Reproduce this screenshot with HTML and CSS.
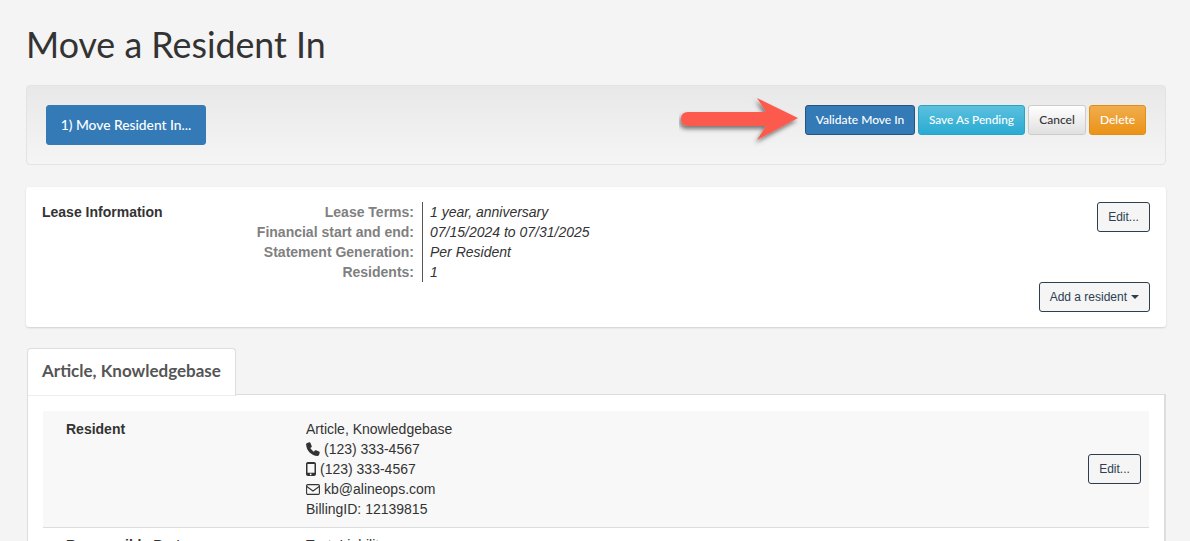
FILE: index.html
```html
<!DOCTYPE html>
<html lang="en">
<head>
<meta charset="utf-8">
<title>Move a Resident In</title>
<link rel="stylesheet" href="styles.css">
</head>
<body>
<main class="page">
  <h1 class="title">Move a Resident In</h1>

  <section class="toolbar">
    <button class="btn btn-step">1) Move Resident In...</button>
    <div class="actions">
      <svg class="arrow" width="126" height="56" viewBox="0 0 126 56" aria-hidden="true">
        <defs><filter id="sh" x="-10%" y="-20%" width="120%" height="150%"><feDropShadow dx="-1.500" dy="3" stdDeviation="2" flood-color="#000" flood-opacity=".5"/></filter></defs>
        <path d="M9 18H87L78 4L119 24L78 46L87 32H9Q2 32 2 25Q2 18 9 18Z" fill="#fc5a4d" filter="url(#sh)"/>
      </svg>
      <button class="btn btn-validate">Validate Move In</button>
      <button class="btn btn-pending">Save As Pending</button>
      <button class="btn btn-cancel">Cancel</button>
      <button class="btn btn-delete">Delete</button>
    </div>
  </section>

  <section class="lease">
    <h2 class="section-label lease-label">Lease Information</h2>
    <dl class="terms">
      <dt>Lease Terms:</dt><dd>1 year, anniversary</dd>
      <dt>Financial start and end:</dt><dd>07/15/2024 to 07/31/2025</dd>
      <dt>Statement Generation:</dt><dd>Per Resident</dd>
      <dt>Residents:</dt><dd>1</dd>
    </dl>
    <div class="lease-actions">
      <button class="btn-outline">Edit...</button>
      <button class="btn-outline">Add a resident <span class="caret"></span></button>
    </div>
  </section>

  <div class="tabs"><div class="tab">Article, Knowledgebase</div></div>

  <section class="tab-panel">
    <div class="row row-shaded">
      <h3 class="section-label row-label">Resident</h3>
      <div class="contact">
        <div>Article, Knowledgebase</div>
        <div class="line"><svg class="ico ico-phone" viewBox="0 0 14 14" aria-hidden="true"><path d="M3.300.3 1.200.9C.5 1.100.1 1.700.1 2.400.5 8.700 5.300 13.500 11.600 13.900c.7 0 1.300-.4 1.500-1.100l.6-2.100c.1-.5-.1-1-.6-1.200L10 8.300c-.4-.2-.9-.1-1.200.3l-.9 1.100C6.700 9 5 7.300 4.300 6.100L5.400 5.200c.4-.3.500-.8.300-1.200L4.500.9C4.300.4 3.800.2 3.300.3Z"/></svg>(123) 333-4567</div>
        <div class="line"><svg class="ico ico-mobile" viewBox="0 0 10 14" aria-hidden="true"><path fill-rule="evenodd" d="M2 0h6c1.100 0 2 .9 2 2v10c0 1.100-.9 2-2 2H2c-1.100 0-2-.9-2-2V2C0 .9.900 0 2 0ZM1.500 2v8.800h7V2ZM5 11.500a.9.900 0 1 0 0 1.700.9.900 0 0 0 0-1.700Z"/></svg>(123) 333-4567</div>
        <div class="line"><svg class="ico ico-mail" viewBox="0 0 14 11" aria-hidden="true"><rect x=".6" y=".6" width="12.800" height="9.800" rx="1.200" fill="none" stroke="#333" stroke-width="1.100"/><path d="M.8 2.500 7 7l6.200-4.500" fill="none" stroke="#333" stroke-width="1.100"/></svg>kb@alineops.com</div>
        <div>BillingID: 12139815</div>
      </div>
      <button class="btn-outline row-edit">Edit...</button>
    </div>
    <div class="row row-next">
      <h3 class="section-label row-label">Responsible Party</h3>
      <div class="contact">Test, Liability</div>
    </div>
  </section>
</main>
</body>
</html>
```

FILE: styles.css
```css
* { box-sizing: border-box; }
html, body { margin: 0; height: 541px; overflow: hidden; }
body { background: #f4f4f4; font-family: "Liberation Sans", Arial, sans-serif; color: #333; font-size: 14px; }
.page { padding: 0 24px 0 26px; width: 1190px; height: 541px; overflow: hidden; }
.title { margin: 0; padding-top: 23px; height: 85px; font: 400 35.76px/44px Lato, sans-serif; color: #333; }

.toolbar { height: 80px; display: flex; align-items: flex-start; justify-content: space-between; padding: 19px 19px 0 19px; border: 1px solid #e3e3e3; border-radius: 4px; background: linear-gradient(#e8e8e8, #f5f5f5); }
.btn { font-family: Lato, sans-serif; font-size: 12px; font-weight: 500; line-height: 16px; border-radius: 3px; border: 1px solid transparent; color: #fff; padding: 0; cursor: pointer; }
.btn-step { width: 160px; height: 40px; font-size: 13.8px; background: #337ab7; border-color: #337ab7; }
.actions { display: flex; align-items: flex-start; gap: 3px; position: relative; }
.arrow { position: absolute; left: -126px; top: -11px; }
.actions .btn { height: 30px; }
.btn-validate { width: 110px; background: #337ab7; border-color: #245580; }
.actions .btn-pending { width: 107px; font-size: 11.8px; background: linear-gradient(#5bc0de, #2aabd2); border-color: #28a4c9; }
.btn-cancel { width: 58px; background: linear-gradient(#fff, #e0e0e0); border-color: #ccc; color: #333; }
.btn-delete { width: 57px; background: linear-gradient(#f0ad4e, #eb9316); border-color: #e38d13; }

.lease { display: flex; margin-top: 22px; height: 140px; padding: 15px 16px; background: #fff; border-radius: 3px; box-shadow: 0 1px 2px rgba(0,0,0,.15); }
.section-label { margin: 0; font-size: 14px; line-height: 20px; font-weight: 700; color: #333; }
.lease-label { width: 208px; }
.terms { display: grid; grid-template-columns: 172px auto; margin: 0; align-self: flex-start; line-height: 20px; }
.terms dt { text-align: right; font-weight: 700; color: #808080; padding-right: 8px; }
.terms dd { margin: 0; padding-left: 7px; font-style: italic; border-left: 1px solid #555; }
.lease-actions { margin-left: auto; display: flex; flex-direction: column; align-items: flex-end; justify-content: space-between; height: 110px; }
.btn-outline { height: 30px; padding: 0 10px; background: #f5f5f5; border: 1px solid #2c3e50; border-radius: 3px; color: #2c3e50; font: 12px/16px "Liberation Sans", Arial, sans-serif; cursor: pointer; }
.lease-actions .btn-outline:first-child { width: 53px; padding: 0; }
.lease-actions .btn-outline:last-child { width: 111px; padding: 0; }
.caret { display: inline-block; width: 0; height: 0; margin-left: 1px; vertical-align: 2px; border-left: 4px solid transparent; border-right: 4px solid transparent; border-top: 4px solid #2c3e50; }

.tabs { margin: 21px 0 0 1px; height: 46px; display: flex; position: relative; z-index: 1; }
.tab { width: 209px; height: 48px; padding: 11px 14px 0; background: #fff; border: 1px solid #ddd; border-bottom-color: #eee; border-radius: 4px 4px 0 0; font: 700 17px/22px Lato, sans-serif; color: #555; }

.tab-panel { margin-left: 1px; height: 147px; padding: 16px 15px 0; background: #fff; border: 1px solid #ddd; border-right-width: 2px; border-bottom: 0; }
.row { position: relative; display: flex; align-items: flex-start; padding: 8px 23px 0; }
.row-shaded { height: 117px; background: #f8f8f8; border-bottom: 1px solid #ddd; }
.row-label { width: 240px; }
.contact { line-height: 20px; color: #333; }
.line { display: flex; align-items: center; gap: 4px; }
.ico { flex: none; fill: #333; display: block; }
.ico-phone { width: 14px; height: 14px; }
.ico-mobile { width: 10px; height: 14px; }
.ico-mail { width: 14px; height: 11px; }
.row-edit { position: absolute; right: 8px; top: 43px; width: 53px; padding: 0; }
.row-next { padding-top: 7px; }
```
